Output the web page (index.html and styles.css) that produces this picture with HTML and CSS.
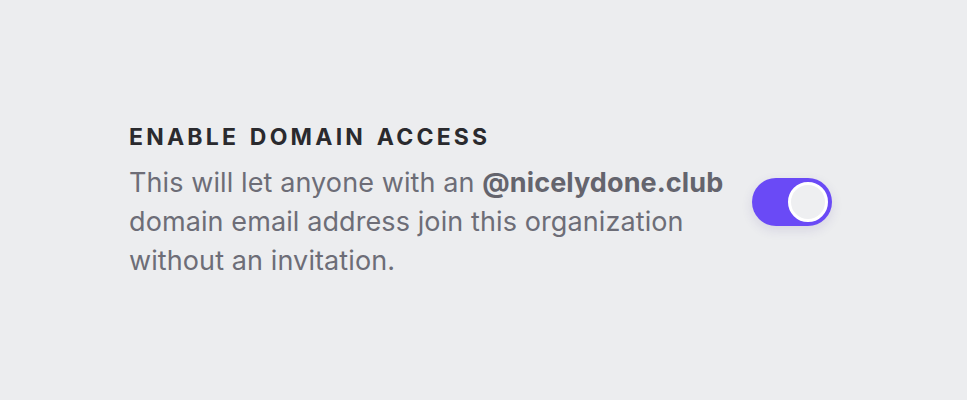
FILE: index.html
```html
<!DOCTYPE html>
<html lang="en">
<head>
<meta charset="utf-8">
<title>Enable domain access</title>
<link rel="stylesheet" href="styles.css">
</head>
<body>
<main class="page">
  <section class="setting">
    <div class="setting-text">
      <h2 class="setting-title">ENABLE DOMAIN ACCESS</h2>
      <p class="setting-desc">This will let anyone with an <strong class="domain">@nicelydone.club</strong> domain email address join this organization without an invitation.</p>
    </div>
    <button class="toggle is-on" type="button" role="switch" aria-checked="true" aria-label="Enable domain access">
      <span class="toggle-knob"></span>
    </button>
  </section>
</main>
</body>
</html>
```

FILE: styles.css
```css
* { box-sizing: border-box; }
html, body {
  margin: 0;
  height: 100%;
}
body {
  background: #ecedef;
  font-family: Inter, "Liberation Sans", sans-serif;
}
.page {
  padding: 123px 0 0 129px;
}
.setting {
  display: flex;
  align-items: center;
  gap: 20px;
}
.setting-text {
  width: 603px;
}
.setting-title {
  margin: 0 0 12px;
  font-size: 23px;
  line-height: 28px;
  font-weight: 700;
  letter-spacing: 0.14em;
  word-spacing: 2px;
  color: #2a2a2e;
}
.setting-desc {
  margin: 0;
  font-size: 27px;
  line-height: 39px;
  font-weight: 400;
  letter-spacing: 0.1px;
  color: #6d6d77;
}
.domain {
  font-weight: 700;
  color: #64646d;
}
.toggle {
  flex: none;
  width: 80px;
  height: 48px;
  padding: 4px;
  border: 0;
  border-radius: 24px;
  background: #6a4af6;
  display: flex;
  justify-content: flex-end;
  align-items: center;
  box-shadow: 0 4px 12px rgba(60, 40, 140, 0.12);
  cursor: pointer;
}
.toggle-knob {
  width: 40px;
  height: 40px;
  border-radius: 50%;
  background: #eeeff1;
  border: 3px solid #ffffff;
}
```
